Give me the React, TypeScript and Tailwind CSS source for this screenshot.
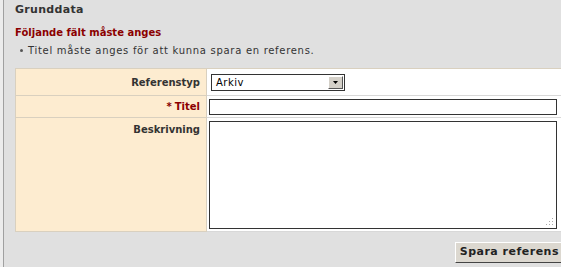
export default function App() {
  const font = { fontFamily: '"DejaVu Sans", Verdana, sans-serif' };
  return (
    <div style={font} className="w-[561px] h-[267px] overflow-hidden bg-[#ececec] pl-[3px]">
      <div className="h-full border-l border-[#a0a0a0] bg-[#e0e0e0] pl-[11px] pt-[3px]">
        <h2 className="text-[11px] leading-[14px] font-bold text-[#333] tracking-[0.3px]">Grunddata</h2>
        <p className="mt-[9px] text-[10px] leading-[13px] font-bold text-[#8b0000]">Följande fält måste anges</p>
        <ul className="mt-[5px] pl-[5px] text-[10px] leading-[13px] text-[#333]">
          <li className="flex items-center gap-[5px]">
            <span className="w-[3px] h-[3px] rounded-full bg-[#555]" />
            <span className="tracking-[0.7px]">Titel måste anges för att kunna spara en referens.</span>
          </li>
        </ul>

        <div className="mt-[11px] w-[560px] border-t border-l border-[#d9d0bf] grid grid-cols-[191px_1fr]">
          <div className="h-[27px] bg-[#fdecd0] border-b border-r border-[#d9d0bf] flex items-center justify-end pr-[6px] text-[10px] font-bold text-[#333]">
            Referenstyp
          </div>
          <div className="h-[27px] bg-white border-b border-[#d8d8d8] flex items-center pl-[4px]">
            <div className="w-[134px] h-[17px] border border-[#333] bg-white flex items-center justify-between pl-[4px] pr-[1px] mt-[1px]">
              <span className="text-[10px] text-black tracking-[0.5px]">Arkiv</span>
              <span className="w-[15px] h-[13px] bg-[#d4d0c8] border border-t-white border-l-white border-r-[#555] border-b-[#555] flex items-center justify-center">
                <svg width="5" height="3" viewBox="0 0 5 3"><path d="M0 0h5L2.5 3z" fill="#000" /></svg>
              </span>
            </div>
          </div>

          <div className="h-[22px] bg-[#fdecd0] border-b border-r border-[#d9d0bf] flex items-center justify-end pr-[6px] text-[10px] font-bold text-[#8b0000]">
            <span className="mr-[3px]">*</span>Titel
          </div>
          <div className="h-[22px] bg-white border-b border-[#d8d8d8] flex items-center pl-[2px]">
            <div className="w-[348px] h-[16px] border border-[#333] bg-white" />
          </div>

          <div className="h-[114px] bg-[#fdecd0] border-b border-r border-[#d9d0bf] flex justify-end pt-[4px] pr-[6px] text-[10px] font-bold text-[#333]">
            Beskrivning
          </div>
          <div className="h-[114px] bg-white border-b border-[#d8d8d8] pl-[2px] pt-[3px]">
            <div className="relative w-[348px] h-[108px] border border-[#333] bg-white">
              <svg className="absolute right-[2px] bottom-[2px]" width="8" height="8" viewBox="0 0 8 8">
                <rect x="6" y="0" width="1" height="1" fill="#aaa" />
                <rect x="3" y="3" width="1" height="1" fill="#aaa" />
                <rect x="6" y="3" width="1" height="1" fill="#aaa" />
                <rect x="0" y="6" width="1" height="1" fill="#aaa" />
                <rect x="3" y="6" width="1" height="1" fill="#aaa" />
                <rect x="6" y="6" width="1" height="1" fill="#aaa" />
              </svg>
            </div>
          </div>
        </div>

        <div className="flex justify-end mt-[10px] -mr-[3px]">
          <button className="h-[21px] px-[4px] bg-[#dcd8d0] border border-t-white border-l-white border-r-[#444] border-b-[#444] text-[11px] font-bold text-[#222] tracking-[0.5px]">
            Spara referens
          </button>
        </div>
      </div>
    </div>
  );
}
